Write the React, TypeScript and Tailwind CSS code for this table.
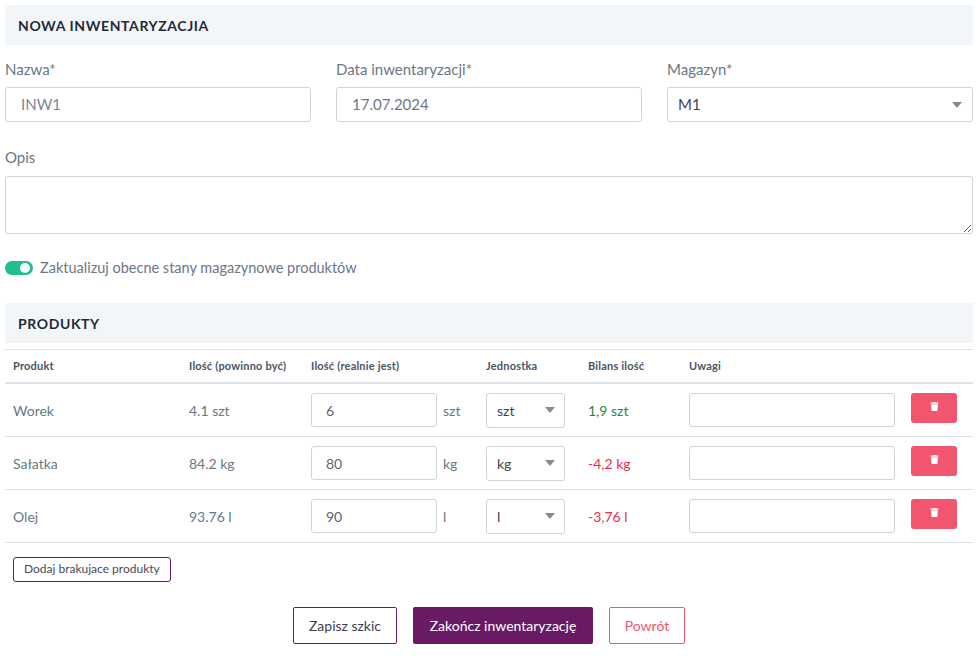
import React from "react";
import { FaTrash } from "react-icons/fa";

const font = { fontFamily: "Lato, 'Noto Sans', sans-serif" };

function Arrow() {
  return (
    <svg width="10" height="6" viewBox="0 0 10 6" className="shrink-0">
      <path d="M0 0 L10 0 L5 6 Z" fill="#8a8a8a" />
    </svg>
  );
}

const rows = [
  { name: "Worek", should: "4.1 szt", real: "6", unit: "szt", bal: "1,9 szt", pos: true },
  { name: "Sałatka", should: "84.2 kg", real: "80", unit: "kg", bal: "-4,2 kg", pos: false },
  { name: "Olej", should: "93.76 l", real: "90", unit: "l", bal: "-3,76 l", pos: false },
];

const cols = "grid grid-cols-[176px_122px_175px_102px_101px_222px_1fr]";

export default function App() {
  return (
    <div className="w-[978px] min-h-[672px] bg-white px-[5px] pt-[5px] text-[15px] text-[#5f6b7a]" style={font}>
      <div className="h-[40px] bg-[#f3f6f9] flex items-center pl-[13px] text-[14px] font-bold tracking-[0.6px] text-[#1f2a37]">
        NOWA INWENTARYZACJIA
      </div>

      <div className="grid grid-cols-3 gap-x-[25px] mt-[14px]">
        <div>
          <div className="h-[20px] leading-[20px] text-[#6b7785]">Nazwa*</div>
          <div className="mt-[8px] h-[35px] border border-[#ced4da] rounded-[3px] flex items-center px-[15px] text-[#7b8794]">INW1</div>
        </div>
        <div>
          <div className="h-[20px] leading-[20px] text-[#6b7785]">Data inwentaryzacji*</div>
          <div className="mt-[8px] h-[35px] border border-[#ced4da] rounded-[3px] flex items-center px-[15px] text-[#6b7785]">17.07.2024</div>
        </div>
        <div>
          <div className="h-[20px] leading-[20px] text-[#6b7785]">Magazyn*</div>
          <div className="mt-[8px] h-[35px] border border-[#ced4da] rounded-[3px] flex items-center justify-between pl-[10px] pr-[10px] text-[#3b4654]">
            <span>M1</span>
            <Arrow />
          </div>
        </div>
      </div>

      <div className="mt-[25px] h-[20px] leading-[20px] text-[#6b7785]">Opis</div>
      <textarea className="mt-[9px] block w-full h-[58px] border border-[#ced4da] rounded-[3px] outline-none" />

      <div className="mt-[24px] h-[20px] flex items-center gap-[7px]">
        <div className="w-[28px] h-[14px] rounded-full bg-[#1fbf91] relative">
          <div className="absolute right-[3px] top-[2px] w-[10px] h-[10px] rounded-full bg-white" />
        </div>
        <span className="text-[14.5px] text-[#6b7785]">Zaktualizuj obecne stany magazynowe produktów</span>
      </div>

      <div className="mt-[25px] h-[40px] bg-[#f3f6f9] flex items-center pl-[13px] text-[14px] font-bold tracking-[0.6px] text-[#1f2a37]">
        PRODUKTY
      </div>

      <div className="mt-[6px] border-t border-[#dee2e6]">
        <div className={`${cols} h-[34px] items-center border-b-2 border-[#dee2e6] text-[11px] font-bold tracking-[0.2px] text-[#4a5563]`}>
          <div className="px-2">Produkt</div>
          <div className="px-2">Ilość (powinno być)</div>
          <div className="px-2">Ilość (realnie jest)</div>
          <div className="px-2">Jednostka</div>
          <div className="px-2">Bilans ilość</div>
          <div className="px-2">Uwagi</div>
          <div className="px-2"></div>
        </div>
        {rows.map((r) => (
          <div key={r.name} className={`${cols} h-[53px] items-center border-b border-[#dee2e6] text-[14px] text-[#6b7785]`}>
            <div className="px-2">{r.name}</div>
            <div className="px-2">{r.should}</div>
            <div className="px-2 flex items-center gap-[6px]">
              <div className="w-[126px] h-[34px] border border-[#ced4da] rounded-[3px] flex items-center px-[14px] text-[#5a6470]">{r.real}</div>
              <span>{r.unit}</span>
            </div>
            <div className="px-2">
              <div className="w-[79px] h-[35px] border border-[#ced4da] rounded-[3px] flex items-center justify-between pl-[10px] pr-[9px] text-[#3b4654]">
                <span>{r.unit}</span>
                <Arrow />
              </div>
            </div>
            <div className={`px-2 ${r.pos ? "text-[#1e8a3c]" : "text-[#ef2b4a]"}`}>{r.bal}</div>
            <div className="px-2">
              <div className="w-[206px] h-[34px] border border-[#ced4da] rounded-[3px]" />
            </div>
            <div className="px-2">
              <div className="w-[46px] h-[30px] rounded-[3px] bg-[#f1566e] flex items-center justify-center -mt-[4px] pb-[3px]">
                <FaTrash className="text-white" size={9} />
              </div>
            </div>
          </div>
        ))}
      </div>

      <div className="mt-[13px] pl-[8px]">
        <button className="h-[25px] px-[10px] border border-[#681a64] rounded-[3px] text-[12px] font-normal text-[#4a4a5a] bg-white">
          Dodaj brakujace produkty
        </button>
      </div>

      <div className="mt-[25px] flex justify-center gap-[16px]">
        <button className="h-[37px] w-[104px] border border-[#681a64] rounded-[2px] text-[14px] text-[#3e3e4e] bg-white">Zapisz szkic</button>
        <button className="h-[37px] w-[180px] rounded-[2px] text-[14px] text-white bg-[#681a64]">Zakończ inwentaryzację</button>
        <button className="h-[37px] w-[76px] border border-[#f1566e] rounded-[2px] text-[14px] text-[#f1566e] bg-white">Powrót</button>
      </div>
    </div>
  );
}
